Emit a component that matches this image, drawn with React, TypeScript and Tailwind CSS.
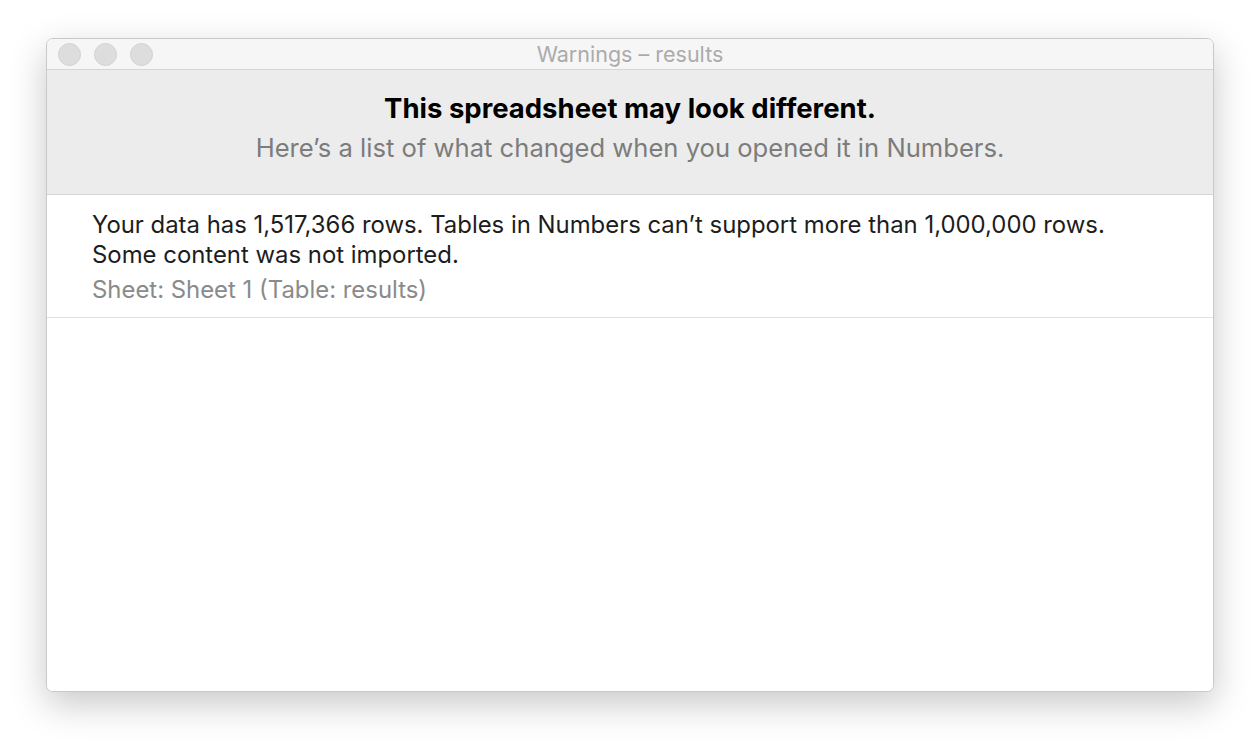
export default function App() {
  return (
    <div className="w-[1260px] h-[746px] bg-white pt-[38px] pl-[46px]" style={{ fontFamily: 'Inter, "Noto Sans", sans-serif' }}>
      <div className="w-[1168px] h-[654px] rounded-[7px] border border-[#c9c9c9] bg-white overflow-hidden flex flex-col shadow-[0_12px_36px_rgba(0,0,0,0.22)]">
        {/* title bar */}
        <div className="relative h-[31px] shrink-0 bg-[#f6f6f6] border-b border-[#d6d6d6] flex items-center justify-center">
          <div className="absolute left-[11px] top-[4px] flex gap-[13px]">
            <span className="w-[23px] h-[23px] rounded-full bg-[#dddddd] border border-[#d2d2d2]" />
            <span className="w-[23px] h-[23px] rounded-full bg-[#dddddd] border border-[#d2d2d2]" />
            <span className="w-[23px] h-[23px] rounded-full bg-[#dddddd] border border-[#d2d2d2]" />
          </div>
          <span className="text-[21.5px] leading-[28px] text-[#ababab]">Warnings – results</span>
        </div>

        {/* header */}
        <div className="h-[125px] shrink-0 bg-[#ececec] border-b border-[#d4d4d4] flex flex-col items-center pt-[21px]">
          <h1 className="text-[27.5px] leading-[34px] font-bold text-black">This spreadsheet may look different.</h1>
          <p className="text-[25.6px] leading-[32px] text-[#7c7c7c] mt-[7px]">Here’s a list of what changed when you opened it in Numbers.</p>
        </div>

        {/* warning row */}
        <div className="h-[123px] shrink-0 border-b border-[#e2e2e2] pl-[45px] pt-[15px]">
          <p className="text-[23.9px] leading-[30px] text-[#1d1d1d]">
            Your data has 1,517,366 rows. Tables in Numbers can’t support more than 1,000,000 rows.
            <br />
            Some content was not imported.
          </p>
          <p className="text-[23.9px] leading-[30px] text-[#8a8a8a] mt-[5px]">Sheet: Sheet 1 (Table: results)</p>
        </div>

        <div className="flex-1 bg-white" />
      </div>
    </div>
  )
}
